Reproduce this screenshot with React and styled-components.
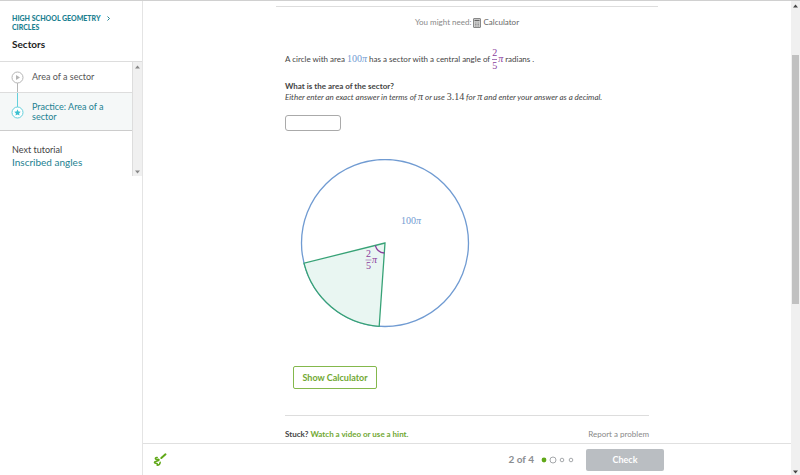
import React from 'react'
import styled, { createGlobalStyle } from 'styled-components'

const GlobalStyle = createGlobalStyle`
  * {
    box-sizing: border-box;
  }
  body {
    margin: 0;
    background: #fff;
    color: #444;
    font-family: Lato, "Liberation Sans", sans-serif;
    font-size: 8px;
    line-height: 11px;
  }
  a {
    color: inherit;
    text-decoration: none;
  }
`
const Page = styled.div`
  display: grid;
  grid-template-columns: 143px 1fr 9px;
  height: 100vh;
  border-top: 1px solid #d0d0d0;
`

/* sidebar */
const Sidebar = styled.aside`
  border-right: 1px solid #e4e4e4;
`
const SideHead = styled.header`
  height: 61px;
  padding: 13px 12px 0;
  border-bottom: 1px solid #ddd;
`
const Crumbs = styled.nav`
  color: #1c8191;
  font-size: 7px;
  font-weight: 900;
  line-height: 9px;
  text-transform: uppercase;

  svg {
    margin-left: 5px;
  }
`
const SideTitle = styled.h1`
  margin: 5px 0 0;
  color: #222;
  font-size: 10px;
  font-weight: 700;
  line-height: 14px;
`
const SideBody = styled.div`
  display: grid;
  grid-template-columns: 1fr 10px;
  height: 114px;
`
const Lessons = styled.ul`
  margin: 0;
  padding: 0;
  list-style: none;
`
const Lesson = styled.li`
  border-bottom: 1px solid ${(p) => (p.$active ? '#ccc' : '#ddd')};
  background: ${(p) => (p.$active ? '#f5f8f8' : '#fff')};
`
const LessonLink = styled.a`
  display: grid;
  grid-template-columns: 13px 1fr;
  column-gap: 8px;
  align-items: stretch;
  height: ${(p) => (p.$active ? 37 : 30)}px;
  padding: 0 12px 0 11px;
  color: ${(p) => (p.$active ? '#1c8191' : '#555')};
  font-size: 9px;
  line-height: 10px;

  span {
    align-self: center;
  }
`
const Next = styled.div`
  padding: 13px 12px 0;
  font-size: 9px;
  line-height: 12px;

  a {
    display: block;
    color: #1c8191;
    font-size: 10px;
  }
`
const Track = styled.div`
  display: flex;
  flex-direction: column;
  align-items: center;
  padding: ${(p) => (p.$page ? '3px 0 1px' : '3px 0 2px')};
  border-left: ${(p) => (p.$page ? 'none' : '1px solid #ddd')};
  background: #f0f0f0;
`
const Thumb = styled.div`
  flex: 0 0 53%;
  width: 7px;
  margin-top: 47px;
  background: #c1c1c1;
`
const Arrow = styled.svg`
  display: block;
  flex: none;
  fill: ${(p) => p.$color};
  transform: ${(p) => (p.$down ? 'rotate(180deg)' : 'none')};
  margin-top: ${(p) => (p.$down ? 'auto' : '0')};
`

/* exercise */
const Main = styled.main`
  display: grid;
  grid-template-rows: 1fr 32px;
  min-height: 0;
`
const Exercise = styled.div`
  overflow: hidden;
`
const TopRule = styled.hr`
  width: 382px;
  max-width: 100%;
  margin: 5px auto 0;
  border: 0;
  border-top: 1px solid #ddd;
`
const Column = styled.div`
  width: 364px;
  max-width: 100%;
  margin: 0 auto;
`
const Need = styled.div`
  display: flex;
  justify-content: center;
  align-items: center;
  gap: 2px;
  margin-top: 10px;
  color: #888;

  a {
    color: #666;
  }
`
const Question = styled.p`
  display: flex;
  align-items: center;
  gap: 2px;
  height: 24px;
  margin: 19px 0 0;
`
const Math = styled.span`
  color: ${(p) => p.$color || 'inherit'};
  font-family: "Liberation Serif", "Times New Roman", serif;
  font-size: 10px;
  font-style: normal;
  line-height: 10px;

  i {
    font-style: italic;
  }
`
const Fraction = styled.span`
  display: inline-flex;
  flex-direction: column;
  line-height: 12px;

  span + span {
    border-top: 1px solid #a678b8;
  }
`
const FractionMath = styled(Math)`
  display: flex;
  align-items: center;
  gap: 1px;
`
const Ask = styled.label`
  display: block;
  margin-top: 10px;
  font-weight: 700;
`
const Instruction = styled.p`
  margin: 0;
  font-style: italic;
`
const Answer = styled.input`
  display: block;
  width: 56px;
  height: 16px;
  margin-top: 12px;
  padding: 0 3px;
  border: 1px solid #aaa;
  border-radius: 3px;
  font: inherit;
`
const Diagram = styled.svg`
  display: block;
  margin: 28px 0 0 15px;
  font-family: "Liberation Serif", "Times New Roman", serif;
  font-size: 10px;
`
const CalcButton = styled.button`
  display: block;
  width: 84px;
  height: 23px;
  margin: 37px 0 0 8px;
  padding: 0;
  border: 1px solid #84b84c;
  border-radius: 2px;
  background: #fff;
  color: #71a832;
  font: 700 9px/12px Lato, sans-serif;
`
const Help = styled.div`
  display: flex;
  justify-content: space-between;
  margin-top: 26px;
  padding-top: 13px;
  border-top: 1px solid #ddd;
`
const Stuck = styled.div`
  font-weight: 700;

  a {
    color: #71a832;
  }
`
const Report = styled.a`
  color: #888;
`

/* bottom bar */
const TaskBar = styled.footer`
  display: flex;
  justify-content: space-between;
  align-items: center;
  padding: 0 127px 0 9px;
  border-top: 1px solid #e0e0e0;
  background: #fff;
`
const ScratchButton = styled.button`
  width: 16px;
  height: 16px;
  padding: 0;
  border: 0;
  background: none;

  svg {
    display: block;
  }
`
const Progress = styled.div`
  display: flex;
  align-items: center;
  color: #8a8d91;
  font-size: 10px;
  font-weight: 700;

  svg {
    margin: 0 11px 0 7px;
  }
`
const CheckButton = styled.button`
  width: 78px;
  height: 22px;
  padding: 0;
  border: 0;
  border-radius: 2px;
  background: #babec2;
  color: #fff;
  font: 700 9px/12px Lato, sans-serif;
`

function ScrollArrow({ down, color = '#888' }) {
  return (
    <Arrow $down={down} $color={color} width="5" height="4" viewBox="0 0 5 4">
      <path d="M2.5 0.5 5 3.5H0Z" />
    </Arrow>
  )
}

function VideoIcon() {
  return (
    <svg width="13" height="30" viewBox="0 0 13 30" fill="none" stroke="#b5b5b5">
      <path d="M6.500 21v9" />
      <circle cx="6.500" cy="15.500" r="5.500" fill="#fff" />
      <path d="M5 13v5l4-2.500Z" fill="#b5b5b5" stroke="none" />
    </svg>
  )
}

function PracticeIcon() {
  return (
    <svg width="13" height="37" viewBox="0 0 13 37" fill="none" stroke="#63d0dc">
      <path d="M6.500 0v14" />
      <circle cx="6.500" cy="19.500" r="5.500" fill="#fff" />
      <path
        d="m6.500 16.300 1 2.100 2.300.3-1.700 1.600.4 2.300-2-1.100-2 1.100.4-2.300-1.700-1.600 2.300-.3Z"
        fill="#3cc0d0"
        stroke="none"
      />
    </svg>
  )
}

function CalculatorIcon() {
  return (
    <svg width="8" height="10" viewBox="0 0 8 10">
      <rect x="0.500" y="0.500" width="7" height="9" rx="0.500" fill="#d0d0d0" stroke="#888" />
      <path d="M1.500 2.500h5" stroke="#666" strokeWidth="1.200" />
      <path d="M2 5h4M2 6.500h4M2 8h4" stroke="#888" strokeWidth="0.800" strokeDasharray="1 0.500" />
    </svg>
  )
}

function CircleDiagram() {
  return (
    <Diagram width="170" height="170" viewBox="0 0 170 170" role="img" aria-label="Circle with a shaded sector">
      <circle cx="85" cy="84" r="83.500" fill="none" stroke="#709bd2" strokeWidth="1.300" />
      <path
        d="M85 84 4 104.200A83.500 83.500 0 0 0 79.200 167.300Z"
        fill="#e9f6f2"
        stroke="#37a276"
        strokeWidth="1.300"
      />
      <path d="M75.300 86.400A10 10 0 0 0 84.300 94" fill="none" stroke="#8a3d9c" strokeWidth="1.300" />
      <text x="101" y="65" fill="#709bd2">
        100<tspan fontStyle="italic">π</tspan>
      </text>
      <g fill="#8a3d9c">
        <text x="66" y="98">2</text>
        <path d="M65.500 101h6" stroke="#a678b8" strokeWidth="0.800" />
        <text x="66" y="110">5</text>
        <text x="72" y="104" fontStyle="italic">π</text>
      </g>
    </Diagram>
  )
}

function ScratchIcon() {
  return (
    <svg width="16" height="16" viewBox="0 0 16 16" fill="none" stroke="#60a818" strokeWidth="1.500" strokeLinecap="round" strokeLinejoin="round">
      <path d="M9.300 6 13.500 2.300" strokeWidth="2" />
      <path d="M5.200 5.400C3.400 5.200 2.800 6.700 4 7.300S7.300 6.600 7 8.200 2.200 8.900 2.400 10.400 6.200 10.300 5.200 13.200C6.600 13.200 8.100 12 8.200 10.300" />
    </svg>
  )
}

export default function App() {
  return (
    <>
      <GlobalStyle />
      <Page>
        <Sidebar>
          <SideHead>
            <Crumbs>
              <a href="#geometry">High school geometry</a>
              <svg width="5" height="5" viewBox="0 0 5 5" fill="none" stroke="#1c8191">
                <path d="m1.500 0.500 2 2-2 2" />
              </svg>
              <br />
              <a href="#circles">Circles</a>
            </Crumbs>
            <SideTitle>Sectors</SideTitle>
          </SideHead>
          <SideBody>
            <div>
              <Lessons>
                <Lesson>
                  <LessonLink href="#area">
                    <VideoIcon />
                    <span>Area of a sector</span>
                  </LessonLink>
                </Lesson>
                <Lesson $active>
                  <LessonLink href="#practice" $active>
                    <PracticeIcon />
                    <span>Practice: Area of a sector</span>
                  </LessonLink>
                </Lesson>
              </Lessons>
              <Next>
                Next tutorial
                <a href="#inscribed">Inscribed angles</a>
              </Next>
            </div>
            <Track>
              <ScrollArrow />
              <ScrollArrow down />
            </Track>
          </SideBody>
        </Sidebar>

        <Main>
          <Exercise>
            <TopRule />
            <Column>
              <Need>
                You might need:
                <CalculatorIcon />
                <a href="#calculator">Calculator</a>
              </Need>
              <Question>
                A circle with area
                <Math $color="#709bd2">
                  100<i>π</i>
                </Math>
                has a sector with a central angle of
                <FractionMath $color="#8a3d9c">
                  <Fraction>
                    <span>2</span>
                    <span>5</span>
                  </Fraction>
                  <i>π</i>
                </FractionMath>
                radians .
              </Question>
              <Ask htmlFor="answer">What is the area of the sector?</Ask>
              <Instruction>
                Either enter an exact answer in terms of <Math><i>π</i></Math> or use <Math>3.14</Math> for{' '}
                <Math><i>π</i></Math> and enter your answer as a decimal.
              </Instruction>
              <Answer id="answer" type="text" />
              <CircleDiagram />
              <CalcButton type="button">Show Calculator</CalcButton>
              <Help>
                <Stuck>
                  Stuck? <a href="#hint">Watch a video or use a hint.</a>
                </Stuck>
                <Report href="#report">Report a problem</Report>
              </Help>
            </Column>
          </Exercise>
          <TaskBar>
            <ScratchButton type="button" aria-label="Scratchpad">
              <ScratchIcon />
            </ScratchButton>
            <Progress>
              2 of 4
              <svg width="34" height="8" viewBox="0 0 34 8" fill="none" stroke="#a5a8ab">
                <circle cx="3" cy="4" r="2.400" fill="#60a818" stroke="none" />
                <circle cx="12" cy="4" r="3" />
                <circle cx="21" cy="4" r="1.800" />
                <circle cx="30" cy="4" r="1.800" />
              </svg>
              <CheckButton type="button">Check</CheckButton>
            </Progress>
          </TaskBar>
        </Main>

        <Track $page>
          <ScrollArrow color="#444" />
          <Thumb />
          <ScrollArrow down color="#444" />
        </Track>
      </Page>
    </>
  )
}
